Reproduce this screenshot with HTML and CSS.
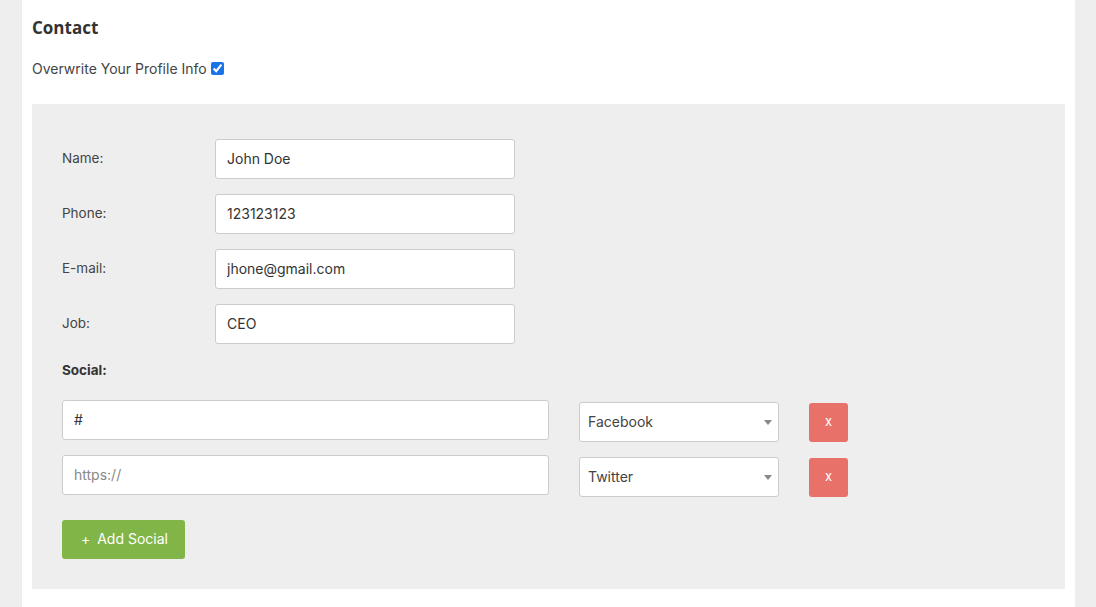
FILE: index.html
```html
<!DOCTYPE html>
<html lang="en">
<head>
<meta charset="utf-8">
<title>Contact</title>
<link rel="stylesheet" href="styles.css">
</head>
<body>
<div class="card">
  <h2 class="title">Contact</h2>
  <label class="overwrite">Overwrite Your Profile Info <input type="checkbox" checked></label>
  <div class="panel">
    <div class="field"><span class="label">Name:</span><input class="input" type="text" value="John Doe"></div>
    <div class="field"><span class="label">Phone:</span><input class="input" type="text" value="123123123"></div>
    <div class="field"><span class="label">E-mail:</span><input class="input" type="text" value="jhone@gmail.com"></div>
    <div class="field"><span class="label">Job:</span><input class="input" type="text" value="CEO"></div>
    <div class="social-label">Social:</div>
    <div class="social-row">
      <input class="input social-input" type="text" value="#">
      <div class="select-wrap"><select class="select"><option>Facebook</option><option>Twitter</option></select></div>
      <button class="remove" type="button">x</button>
    </div>
    <div class="social-row">
      <input class="input social-input" type="text" placeholder="https://">
      <div class="select-wrap"><select class="select"><option>Twitter</option><option>Facebook</option></select></div>
      <button class="remove" type="button">x</button>
    </div>
    <button class="add" type="button"><span class="plus">+</span> Add Social</button>
  </div>
</div>
</body>
</html>
```
FILE: styles.css
```css
html, body {
  margin: 0;
  padding: 0;
  background: #eeeeee;
}
body {
  font-family: "Inter", "Liberation Sans", sans-serif;
  color: #444;
  font-size: 14px;
}
.card {
  margin-left: 22px;
  width: 1033px;
  background: #ffffff;
  padding: 16px 10px 18px;
}
.title {
  margin: 0;
  font-family: "Open Sans", "Noto Sans", sans-serif;
  font-weight: 700;
  font-size: 17px;
  line-height: 24px;
  color: #333;
}
.overwrite {
  display: flex;
  align-items: center;
  gap: 4px;
  margin-top: 19px;
  line-height: 20px;
  font-size: 14px;
  color: #444;
}
.overwrite input {
  margin: 0 0 2px;
  width: 13px;
  height: 13px;
  accent-color: #1a73e8;
}
.panel {
  margin-top: 25px;
  background: #eeeeee;
  padding: 35px 30px 30px;
}
.field {
  display: flex;
  align-items: center;
  margin-bottom: 15px;
}
.field:nth-child(4) {
  margin-bottom: 0;
}
.label {
  width: 153px;
  font-size: 13.5px;
  color: #444;
  padding-bottom: 2px;
}
.input {
  box-sizing: border-box;
  height: 40px;
  width: 300px;
  border: 1px solid #cccccc;
  border-radius: 3px;
  background: #fff;
  padding: 0 11px 2px;
  font-family: inherit;
  font-size: 14px;
  color: #333;
  outline: none;
}
.input::placeholder {
  color: #888;
}
.social-label {
  margin-top: 16px;
  line-height: 20px;
  font-weight: 700;
  font-size: 13.5px;
  color: #333;
}
.social-row {
  display: flex;
  align-items: flex-start;
  gap: 30px;
  height: 40px;
  margin-top: 20px;
}
.social-row + .social-row {
  margin-top: 15px;
}
.social-input {
  width: 487px;
}
.select-wrap {
  position: relative;
  margin-top: 2px;
}
.select-wrap::after {
  content: "";
  position: absolute;
  right: 7px;
  top: 18px;
  border-left: 4px solid transparent;
  border-right: 4px solid transparent;
  border-top: 5px solid #888;
  pointer-events: none;
}
.select {
  appearance: none;
  -webkit-appearance: none;
  box-sizing: border-box;
  width: 200px;
  height: 40px;
  border: 1px solid #cccccc;
  border-radius: 3px;
  background: #fff;
  padding: 0 20px 2px 8px;
  font-family: inherit;
  font-size: 14px;
  color: #444;
  outline: none;
}
.remove {
  margin-top: 3px;
  width: 39px;
  height: 39px;
  border: none;
  border-radius: 3px;
  background: #e8716a;
  color: #fff;
  font-family: inherit;
  font-size: 13px;
  padding: 0 0 3px;
}
.add {
  margin-top: 25px;
  height: 39px;
  border: none;
  border-radius: 3px;
  background: #82b548;
  color: #fff;
  font-family: inherit;
  font-size: 14px;
  padding: 0 17px 2px 19px;
}
.plus {
  margin-right: 3px;
}
```
